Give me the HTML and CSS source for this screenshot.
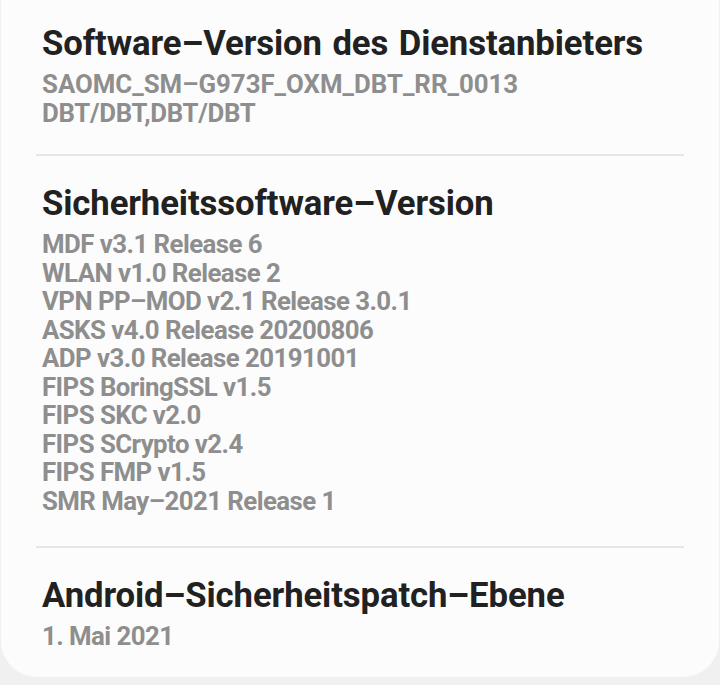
FILE: index.html
```html
<!DOCTYPE html>
<html lang="de">
<head>
<meta charset="utf-8">
<title>Softwareinformationen</title>
<link rel="stylesheet" href="styles.css">
</head>
<body>
<div class="card">
  <section class="item item-first">
    <h2 class="title">Software–Version des Dienstanbieters</h2>
    <div class="value value-code">
      <div class="code-line">SAOMC_SM–G973F_OXM_DBT_RR_0013</div>
      <div>DBT/DBT,DBT/DBT</div>
    </div>
  </section>
  <hr class="divider">
  <section class="item item-mid">
    <h2 class="title">Sicherheitssoftware–Version</h2>
    <div class="value">
      <div>MDF v3.1 Release 6</div>
      <div>WLAN v1.0 Release 2</div>
      <div>VPN PP–MOD v2.1 Release 3.0.1</div>
      <div>ASKS v4.0 Release 20200806</div>
      <div>ADP v3.0 Release 20191001</div>
      <div>FIPS BoringSSL v1.5</div>
      <div>FIPS SKC v2.0</div>
      <div>FIPS SCrypto v2.4</div>
      <div>FIPS FMP v1.5</div>
      <div>SMR May–2021 Release 1</div>
    </div>
  </section>
  <hr class="divider">
  <section class="item item-last">
    <h2 class="title">Android–Sicherheitspatch–Ebene</h2>
    <div class="value">
      <div>1. Mai 2021</div>
    </div>
  </section>
</div>
</body>
</html>
```

FILE: styles.css
```css
html, body {
  margin: 0;
  padding: 0;
}
body {
  background: #f0f0f0;
  font-family: Roboto, "Noto Sans", sans-serif;
  width: 720px;
  height: 685px;
  overflow: hidden;
}
.card {
  background: #fcfcfc;
  margin: 0 1px;
  height: 677px;
  border-radius: 0 0 36px 36px;
  box-sizing: border-box;
  display: flex;
  flex-direction: column;
}
.item {
  padding: 0 30px 0 41px;
}
.item-first {
  padding-top: 23px;
  padding-bottom: 27px;
}
.item-mid {
  padding-top: 27px;
  padding-bottom: 31px;
}
.item-last {
  padding-top: 27px;
}
.title {
  margin: 0;
  font-size: 34.7px;
  line-height: 40px;
  font-weight: 700;
  color: #212121;
  letter-spacing: -0.1px;
  word-spacing: 2px;
}
.value {
  margin-top: 7px;
  font-size: 25.8px;
  line-height: 28.5px;
  font-weight: 700;
  color: #8e8e8e;
  letter-spacing: -0.55px;
}
.value-code {
  letter-spacing: -0.3px;
}
.code-line {
  letter-spacing: 0;
}
.divider {
  margin: 0 35px;
  border: 0;
  height: 2px;
  background: #e6e6e6;
}
```
